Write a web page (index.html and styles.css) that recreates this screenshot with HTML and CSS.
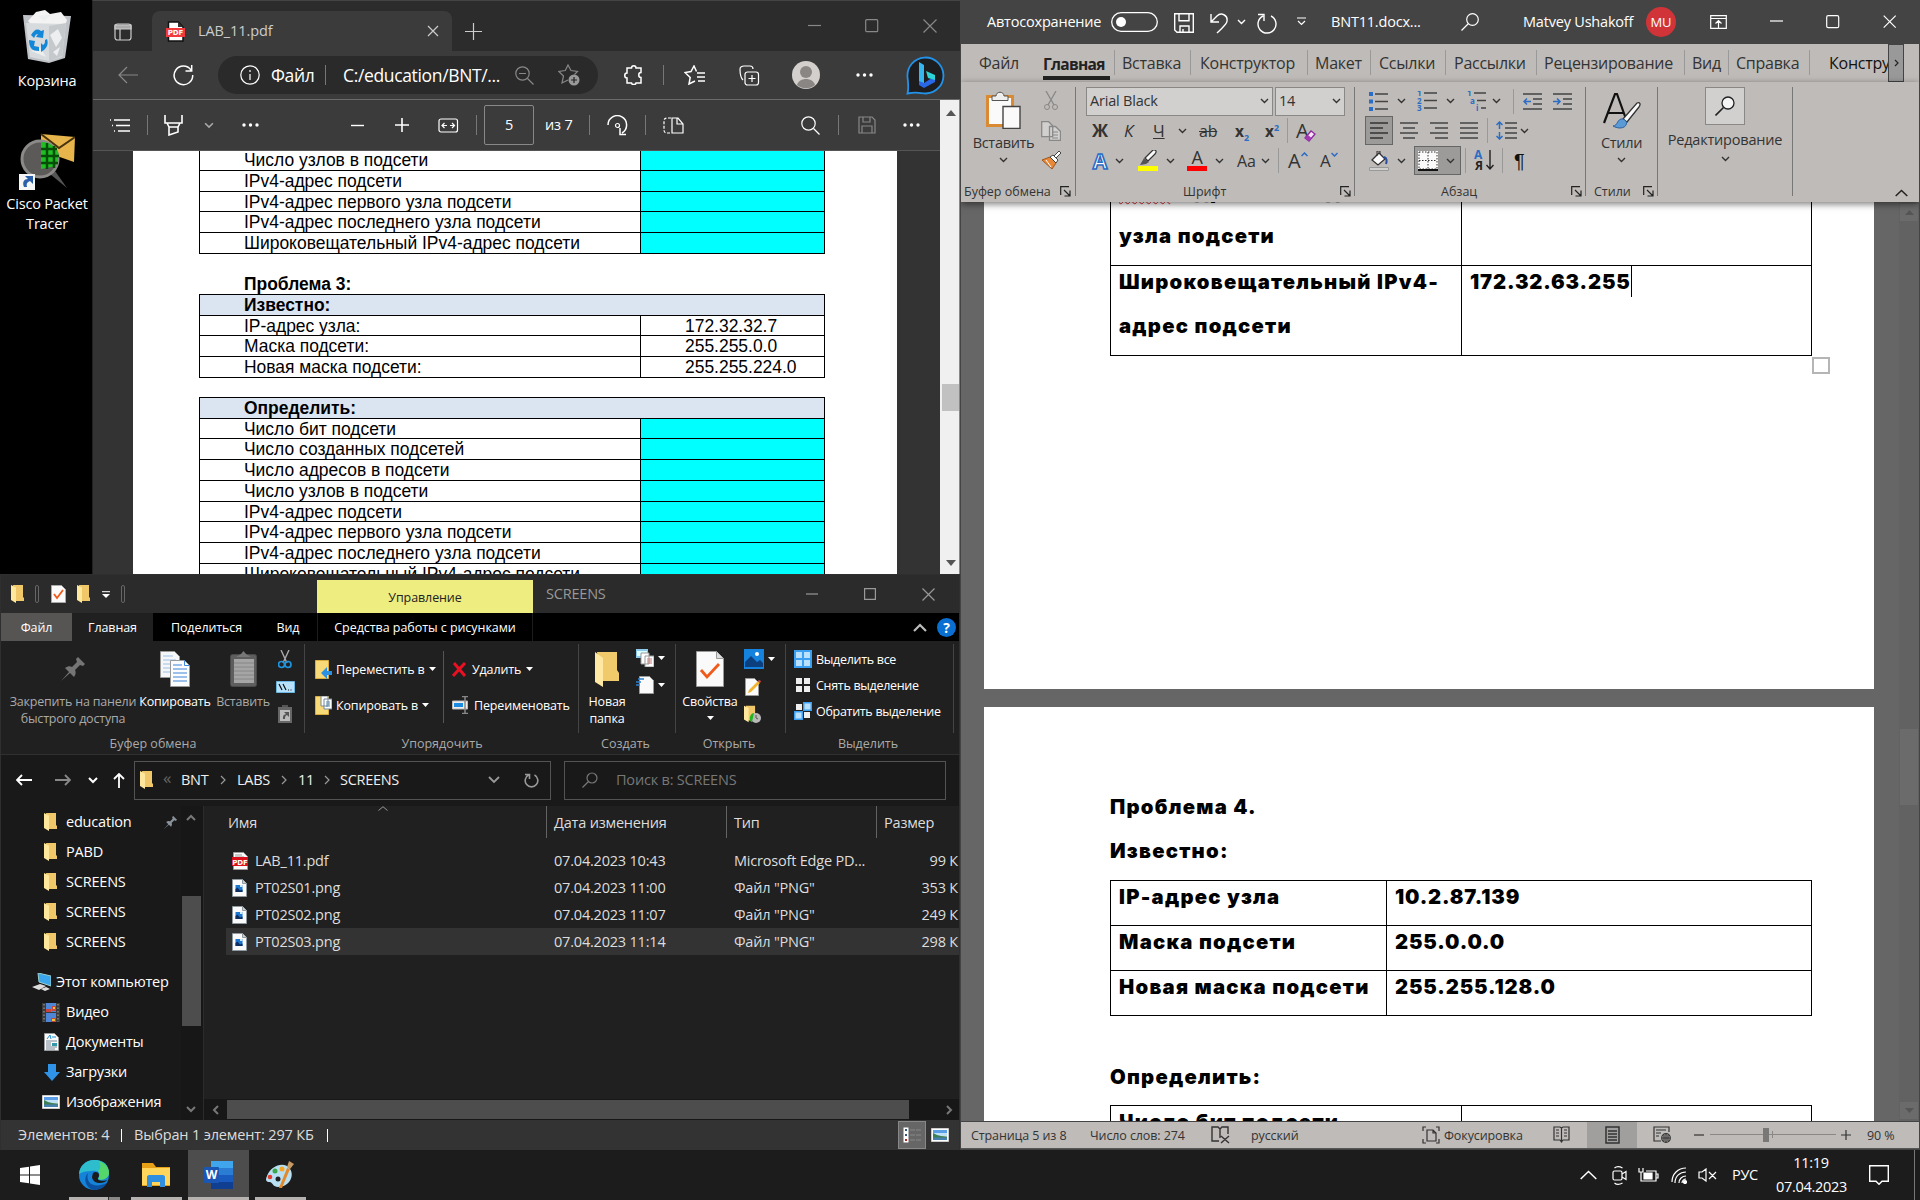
FILE: index.html
```html
<!DOCTYPE html>
<html lang="ru">
<head>
<meta charset="utf-8">
<title>Desktop</title>
<link rel="stylesheet" href="styles.css">
</head>
<body>
<svg class="defs" width="0" height="0">
  <symbol id="folder" viewBox="0 0 13 18"><path d="M2 0h10v12l1 1v3H4z" fill="#f0c869"/><path d="M0 0l5 2.500v15.500L0 15z" fill="#ffe79b"/></symbol>
  <symbol id="chev" viewBox="0 0 9 6"><path d="M1 1l3.500 3.500L8 1" fill="none" stroke="currentColor" stroke-width="1.400"/></symbol>
  <symbol id="tri" viewBox="0 0 7 4"><path d="M0 0h7L3.500 4z" fill="currentColor"/></symbol>
  <symbol id="launch" viewBox="0 0 11 11"><path d="M.7 9V.7H9M4 4l5.500 5.500M10 4.500V10H4.500" fill="none" stroke="#222" stroke-width="1.200"/></symbol>
  <symbol id="png" viewBox="0 0 15 18"><path d="M.5.5h10l4 4v13H.5z" fill="#fafafa" stroke="#8f9aa0"/><path d="M10.500.5v4h4" fill="#ccc" stroke="#8f9aa0"/><path d="M3.500 6h7v7h-7z" fill="#1d77cf"/><path d="M3.500 13v-3l2-1.500 2.500 3 2.500-1v2.500z" fill="#0e2f62"/><path d="M8 6h2.500v2H8z" fill="#cfeaff"/></symbol>
  <symbol id="pic" viewBox="0 0 18 14"><path d="M.5.5h17v13H.5z" fill="#fff" stroke="#ccc"/><path d="M2 2h14v4H2z" fill="#5a9ee8"/><path d="M2 5h14v3H2z" fill="#bfe0f5"/><path d="M2 5l4 2 4 1 6 .5V10H2z" fill="#3f7f56"/><path d="M2 9.500h14V12H2z" fill="#477fae"/></symbol>
  <symbol id="pin" viewBox="0 0 24 24"><path d="M0 24l8-9-4-4c3-2 5-2 7-1l5-5-1-3 2-2 7 7-2 2-3-1-5 5c1 2 1 4-1 7l-4-4z" fill="currentColor"/></symbol>
</svg>
<main class="desktop">
  <aside class="shortcuts">
    <div class="shortcut">
      <svg width="48" height="54" viewBox="0 0 48 54"><path d="M0 5l48 1-6 42-16 5-21-4z" fill="#bfc3c7"/><path d="M5 11l8-9 9-2 5 4 11-2 6 8-3 8-29 1z" fill="#f3f3f3"/><path d="M3 13l40 1-4 33-13 4-19-4z" fill="#d8dbde"/><path d="M26 16l17-3-4 33-13 5z" fill="#c6c9cc"/><path d="M27 25l8-6 4 9-6 9zM30 42l7-5-3 9zM8 41l9-4 6 10zM15 6l6 5 8-7z" fill="#eceeef"/><path d="M8 25c3-5 6-7 10-4l3-1-1 8-7-1 2-3c-3 0-3 3-4 4zM6 30l6 1-1 5 5 1v4c-7 0-10-3-10-11zM18 42v-9l2 2c2-1 2-3 2-5l2-1c2 6-1 9-3 11z" fill="#1488d8"/></svg>
      <span>Корзина</span>
    </div>
    <div class="shortcut cisco">
      <svg width="56" height="58" viewBox="0 0 56 58"><path d="M22 2l34 3-1 25-20-7-13 2z" fill="#e8b44c"/><path d="M22 2l18 14L56 5" fill="none" stroke="#46330f" stroke-width="2"/><path d="M31 42l5-3 12 17z" fill="#555"/><circle cx="21" cy="27" r="18" fill="#5c5a58" stroke="#8c8a88" stroke-width="3"/><path d="M22 10a18 18 0 0 1 18 13L37 34l-15 3z" fill="#20bd25"/><path d="M28 11v26M35 14v22M22 17h16M22 24h18M22 31h17" stroke="#064d08" stroke-width="2.500"/><path d="M0 42h16v16H0z" fill="#f5f5f5"/><path d="M5 55c-2-5 0-8 4-8l-3-3h8v8l-3-3c-3 1-4 3-3 6z" fill="#2a5ea8"/></svg>
      <span>Cisco Packet<br>Tracer</span>
    </div>
  </aside>

  <section class="win edge">
    <header class="edge-title">
      <svg class="i low" width="18" height="18"><rect x="1" y="1" width="16" height="16" rx="2.500"/><path d="M1 2h16v4H1z" fill="#aaa"/><path d="M6 6v11"/></svg>
      <div class="edge-tab">
        <svg width="20" height="21" viewBox="0 0 20 21"><path d="M2.500 1h10L17 6v14H2.500z" fill="#fff" stroke="#111" stroke-width="1.500"/><path d="M12 1v5h5z" fill="#333"/><path d="M0 7h19v9H0z" fill="#f2393d"/><text x="9.500" y="14.300" class="pdf-mark">PDF</text></svg>
        <span>LAB_11.pdf</span>
        <svg class="i" width="12" height="12"><path d="M1 1l10 10M11 1L1 11"/></svg>
      </div>
      <svg class="i low" width="17" height="17"><path d="M0 8.500h17M8.500 0v17"/></svg>
      <svg class="i dim" width="13" height="13"><path d="M0 6.500h13"/></svg>
      <svg class="i dim" width="14" height="14"><rect x=".7" y=".7" width="12" height="12" rx="1"/></svg>
      <svg class="i dim" width="14" height="14"><path d="M.5.5l13 13M13.500.5l-13 13"/></svg>
    </header>
    <div class="edge-address">
      <svg class="i dim" width="20" height="18"><path d="M9 1L1 9l8 8M1 9h19"/></svg>
      <svg class="i" width="21" height="21"><path d="M18 5A9.300 9.300 0 1 0 19.700 10M12.500 6h6.200V0" stroke-width="1.500"/></svg>
      <div class="pill">
        <svg class="i" width="20" height="20"><circle cx="10" cy="10" r="9.200"/><path d="M10 9v6M10 5v2"/></svg>
        <span>Файл</span><i class="bar"></i><span>C:/education/BNT/...</span>
        <svg class="i dim" width="19" height="19"><circle cx="7.500" cy="7.500" r="6.700"/><path d="M12.500 12.500l6 6M4 7.500h7"/></svg>
        <svg class="i dim" width="22" height="22"><path d="M10 16l-6 3 1.500-7L.8 7.500l6.500-1L10 1l3 5.500 6.500 1-3 3"/><circle cx="16" cy="16" r="5.500" fill="#999" stroke="none"/><path d="M16 13v6M13 16h6" stroke="#222"/></svg>
      </div>
      <svg class="i" width="20" height="20"><path d="M3 3h4.500c0-3 4.500-3 4.500 0h5v4.500c-3 0-3 5 0 5V18h-5c0 2-4.500 2-4.500 0H3v-5c-3 0-3-5 0-5z" stroke-width="1.500"/></svg>
      <i class="bar"></i>
      <svg class="i" width="21" height="20"><path d="M13 8h8M13 12h8M14 16h7M11 16l-6 3 1.200-6.500L1 7.500l6-1L10 1l2.500 5.500" stroke-width="1.500"/></svg>
      <svg class="i" width="21" height="21"><rect x="6" y="7" width="13.500" height="13" rx="2.500"/><path d="M13 10v7M9.500 13.500h7M4 15C1 12 1 8 1 4c0-2 2-3 4-3h6c2 0 3 1 3 3"/></svg>
      <svg width="28" height="28"><circle cx="14" cy="14" r="14" fill="#d2cfcc"/><circle cx="14" cy="11" r="6" fill="#8a8683"/><path d="M5 24c2-8 16-8 18 0a14 14 0 0 1-18 0z" fill="#8a8683"/></svg>
      <svg width="17" height="4"><g fill="#fff"><circle cx="2" cy="2" r="1.700"/><circle cx="8.500" cy="2" r="1.700"/><circle cx="15" cy="2" r="1.700"/></g></svg>
      <svg width="39" height="39" viewBox="0 0 39 39"><path d="M1.500 37.500C3 32 2 26 1.500 21A18 18 0 1 1 20 37.500c-6 0-8-2-18.500 0z" fill="#1d1d1f" stroke="#2392e8" stroke-width="1.800"/><path d="M13 6l5 3v20l-5-3z" fill="#36b5ee"/><path d="M13 25l5 2 11-7v6l-11 6-5-3z" fill="#2867e5"/><path d="M20 15l9 4v5l-7-2z" fill="#2cd3d7"/></svg>
    </div>
    <div class="edge-main">
      <div class="pdf">
        <div class="pdf-tools">
          <svg class="i" width="22" height="15"><path d="M5 2h16M7 7.500h14M9 13h12M1 2h1M3 7.500h1M5 13h1" stroke-width="1.700"/></svg>
          <i class="bar"></i>
          <svg class="i" width="19" height="21"><path d="M1 0v8h17V0M3 8l2 4h9l2-4M5 12v8l9-3v-5" stroke-width="1.600"/></svg>
          <svg class="soft" width="10" height="7"><use href="#chev"/></svg>
          <svg width="17" height="4"><g fill="#fff"><circle cx="2" cy="2" r="1.700"/><circle cx="8.500" cy="2" r="1.700"/><circle cx="15" cy="2" r="1.700"/></g></svg>
          <svg class="i" width="13" height="13"><path d="M0 6.500h13" stroke-width="1.400"/></svg>
          <svg class="i" width="14" height="14"><path d="M0 7h14M7 0v14" stroke-width="1.600"/></svg>
          <svg class="i" width="21" height="15"><rect x="1" y="1" width="18.500" height="13" rx="2"/><path d="M6.500 5L4 7.500 6.500 10M4.500 7.500H9M14 5l2.500 2.500L14 10M12 7.500h4"/></svg>
          <i class="bar"></i>
          <span class="page-input">5</span>
          <span>из 7</span>
          <i class="bar"></i>
          <svg class="i" width="21" height="21"><path d="M1 10a9.300 9.300 0 1 1 14 8M13 13v6.500h6" stroke-width="1.500"/><circle cx="10.500" cy="10.500" r="2"/></svg>
          <i class="bar"></i>
          <svg class="i" width="21" height="17"><path d="M8 1H4C2 1 1 2 1 4v9c0 2 1 3 3 3h4" stroke-dasharray="3 1.500"/><path d="M9 1h6l5 6v9H9zM14 1v6h6"/></svg>
          <svg class="i" width="19" height="19"><circle cx="7.500" cy="7.500" r="6.700"/><path d="M12.500 12.500l6 6"/></svg>
          <i class="bar"></i>
          <svg class="i dim" width="18" height="18"><path d="M1 1h13l3 3v13H1zM4 17v-7h10v7M5 1v5h7V1"/></svg>
          <svg width="17" height="4"><g fill="#fff"><circle cx="2" cy="2" r="1.700"/><circle cx="8.500" cy="2" r="1.700"/><circle cx="15" cy="2" r="1.700"/></g></svg>
        </div>
        <div class="pdf-view">
          <div class="sheet">
            <div class="ptable">
              <div class="prow"><span>Число узлов в подсети</span><span class="ans"></span></div>
              <div class="prow"><span>IPv4-адрес подсети</span><span class="ans"></span></div>
              <div class="prow"><span>IPv4-адрес первого узла подсети</span><span class="ans"></span></div>
              <div class="prow"><span>IPv4-адрес последнего узла подсети</span><span class="ans"></span></div>
              <div class="prow"><span>Широковещательный IPv4-адрес подсети</span><span class="ans"></span></div>
            </div>
            <h2>Проблема 3:</h2>
            <div class="ptable top">
              <div class="prow head"><b>Известно:</b></div>
              <div class="prow"><span>IP-адрес узла:</span><span class="val">172.32.32.7</span></div>
              <div class="prow"><span>Маска подсети:</span><span class="val">255.255.0.0</span></div>
              <div class="prow"><span>Новая маска подсети:</span><span class="val">255.255.224.0</span></div>
            </div>
            <div class="ptable top second">
              <div class="prow head"><b>Определить:</b></div>
              <div class="prow"><span>Число бит подсети</span><span class="ans"></span></div>
              <div class="prow"><span>Число созданных подсетей</span><span class="ans"></span></div>
              <div class="prow"><span>Число адресов в подсети</span><span class="ans"></span></div>
              <div class="prow"><span>Число узлов в подсети</span><span class="ans"></span></div>
              <div class="prow"><span>IPv4-адрес подсети</span><span class="ans"></span></div>
              <div class="prow"><span>IPv4-адрес первого узла подсети</span><span class="ans"></span></div>
              <div class="prow"><span>IPv4-адрес последнего узла подсети</span><span class="ans"></span></div>
              <div class="prow"><span>Широковещательный IPv4-адрес подсети</span><span class="ans"></span></div>
            </div>
          </div>
        </div>
      </div>
      <div class="light-scroll">
        <svg width="10" height="6"><path d="M0 6l5-6 5 6z" fill="#555"/></svg>
        <i></i>
        <svg width="10" height="6"><path d="M0 0h10L5 6z" fill="#555"/></svg>
      </div>
    </div>
  </section>

  <section class="win explorer">
    <header class="ex-title">
      <svg width="13" height="18"><use href="#folder"/></svg>
      <i class="slot"></i>
      <svg width="15" height="18"><path d="M.5.5h10l4 4v13H.5z" fill="#fafafa" stroke="#aaa"/><path d="M3 9l3 4 6-8" fill="none" stroke="#f05a1a" stroke-width="1.800"/></svg>
      <svg width="13" height="18"><use href="#folder"/></svg>
      <svg width="8" height="7"><path d="M0 .7h8" stroke="#fff"/><path d="M0 3h8L4 7z" fill="#fff"/></svg>
      <i class="slot"></i>
      <div class="manage">Управление</div>
      <span>SCREENS</span>
      <svg class="i" width="12" height="12"><path d="M0 6h12"/></svg>
      <svg class="i" width="12" height="12"><path d="M.6.6h10.800v10.800H.6z"/></svg>
      <svg class="i" width="13" height="13"><path d="M.5.5l12 12M12.500.5l-12 12"/></svg>
    </header>
    <nav class="ex-tabs">
      <span class="file">Файл</span><span class="on">Главная</span><span>Поделиться</span><span>Вид</span><span class="ctx">Средства работы с рисунками</span>
      <svg class="i" width="14" height="9"><path d="M1 8l6-6 6 6" stroke-width="2.200"/></svg>
      <b class="help">?</b>
    </nav>
    <div class="ex-ribbon">
      <div class="grp g1">
        <div class="grp-body">
          <div class="big off pinb"><svg width="24" height="24"><use href="#pin"/></svg><span>Закрепить на панели<br>быстрого доступа</span></div>
          <div class="big"><svg width="30" height="36" viewBox="0 0 30 36"><path d="M.5.5h14l5 5v21H.5z" fill="#f4f6f8" stroke="#999"/><path d="M3 5h10M3 9h13M3 13h13M3 17h13M3 21h13" stroke="#9cc0e8"/><path d="M10.500 9.500h14l5 5v21h-19z" fill="#fbfcfd" stroke="#999"/><path d="M24.500 9.500v5h5M13 14h9M13 18h14M13 22h14M13 26h14M13 30h14" fill="none" stroke="#3c85d8"/></svg><span>Копировать</span></div>
          <div class="big off"><svg width="27" height="36" viewBox="0 0 27 36"><rect x=".5" y="3.500" width="26" height="32" rx="2" fill="#5e5e5e" stroke="#494949"/><path d="M4 8h20v24H4z" fill="#a5a5a5"/><path d="M4 12h20M4 16h20M4 20h20M4 24h20M4 28h20" stroke="#868686"/><path d="M6 6l5-3 2.500-3L16 3l5 3z" fill="#777"/></svg><span>Вставить</span></div>
          <div class="minis">
            <svg width="14" height="19" viewBox="0 0 14 19"><path d="M3 0l6 13M11 0L5 13" stroke="#aaa" stroke-width="1.400"/><circle cx="3.500" cy="14.500" r="3" fill="none" stroke="#1e93e0" stroke-width="1.700"/><circle cx="10" cy="14.500" r="3" fill="none" stroke="#1e93e0" stroke-width="1.700"/></svg>
            <svg width="19" height="12"><path d="M.5.5h18v11H.5z" fill="#b8e2fb" stroke="#6bb5e3"/><path d="M3 3l3 6M7 3l3 6M12 9h1M14.500 9h1" stroke="#111" stroke-width="1.200"/></svg>
            <svg width="14" height="18"><path d="M0 2h14v16H0z" fill="#666"/><path d="M2 5h10v11H2z" fill="#bbb"/><path d="M4 2h6V0H4zM5 14c0-3 0-4 3-5L6 7h5v5l-2-2c-2 1-2 2-2 4z" fill="#555"/></svg>
          </div>
        </div>
        <footer>Буфер обмена</footer>
      </div>
      <div class="grp g2">
        <div class="grp-body two">
          <div><svg width="17" height="19"><path d="M.5.5h13v18H.5z" fill="#f8d978" stroke="#d8ad3d"/><path d="M17 11h-5V7l-6 6 6 6v-4h5z" fill="#2b8fe2"/></svg><span>Переместить в</span><svg width="7" height="4"><use href="#tri"/></svg></div>
          <div class="sep"><svg width="15" height="15"><path d="M2 1l11 13M13 1L1 14" stroke="#e81123" stroke-width="3"/></svg><span>Удалить</span><svg width="7" height="4"><use href="#tri"/></svg></div>
          <div><svg width="17" height="19"><path d="M.5.5h13v18H.5z" fill="#f8d978" stroke="#d8ad3d"/><path d="M6 0h7v10H6zM9 3h8v10H9z" fill="#fff" stroke="#789"/><path d="M11 6h4M11 8h4M11 10h4" stroke="#58a"/></svg><span>Копировать в</span><svg width="7" height="4"><use href="#tri"/></svg></div>
          <div class="sep"><svg width="17" height="18"><path d="M.5 5h15v8H.5z" fill="#eee" stroke="#bbb"/><path d="M2 7h9v4H2z" fill="#1c8be0"/><path d="M10 .5h6M10 17.500h6M13 0v18" stroke="#888" stroke-width="1.500"/></svg><span>Переименовать</span></div>
        </div>
        <footer>Упорядочить</footer>
      </div>
      <div class="grp g3">
        <div class="grp-body">
          <div class="big"><svg width="24" height="36" viewBox="0 0 24 36"><path d="M2 1h20v18l2 3v8H6z" fill="#f1ca6c"/><path d="M0 1l8 6v29L0 31z" fill="#ffe8a3"/></svg><span>Новая<br>папка</span></div>
          <div class="minis">
            <div><svg width="18" height="18"><path d="M0 0h12v9H0z" fill="#8dc9e8"/><path d="M1 2h10v5H1z" fill="#dff"/><path d="M5 4h8v11H5zM9 7h9v11H9z" fill="#fff" stroke="#999"/><path d="M11 10h5M11 12h5M11 14h5" stroke="#c77"/></svg><svg width="7" height="4"><use href="#tri"/></svg></div>
            <div><svg width="18" height="18"><path d="M3.500.5h10l4 4v13h-14z" fill="#fafafa" stroke="#999"/><path d="M2 3h6M0 6h5M-1 9h5" stroke="#2a80d0" stroke-width="1.400"/></svg><svg width="7" height="4"><use href="#tri"/></svg></div>
          </div>
        </div>
        <footer>Создать</footer>
      </div>
      <div class="grp g4">
        <div class="grp-body">
          <div class="big"><svg width="28" height="36" viewBox="0 0 28 36"><path d="M.5.5h20l7 7v28H.5z" fill="#fafafa" stroke="#999"/><path d="M20.500.5v7h7" fill="#ddd" stroke="#999"/><path d="M5 19l6 7 12-13" fill="none" stroke="#f05a1a" stroke-width="2.800"/></svg><span>Свойства</span><svg width="7" height="4"><use href="#tri"/></svg></div>
          <div class="minis">
            <div><svg width="20" height="20"><path d="M0 0h20v20H0z" fill="#1583de"/><path d="M1 18V13l6-6 6 6 3-2 3 3v4z" fill="#0c3f7e"/><circle cx="13" cy="5" r="2" fill="#fff"/></svg><svg width="7" height="4"><use href="#tri"/></svg></div>
            <svg width="17" height="18"><path d="M1.500.5h9l4 4v13h-13z" fill="#fafafa" stroke="#999"/><path d="M4 15l1-3 9-9 2 2-9 9z" fill="#f0b42f"/><path d="M14 3l2 2 1-2-2-1z" fill="#d44"/></svg>
            <svg width="17" height="19" viewBox="0 0 17 19"><use href="#folder" width="12" height="18"/><circle cx="12" cy="13" r="5" fill="#b9b9b9"/><path d="M7 17c-3-4 0-9 3-9l-2 9z" fill="#22b422"/><path d="M12 10v3l2 1" stroke="#555" fill="none"/></svg>
          </div>
        </div>
        <footer>Открыть</footer>
      </div>
      <div class="grp g5">
        <div class="grp-body col">
          <div><svg width="18" height="18"><path d="M0 0h18v18H0z" fill="#3a9ff0"/><path d="M2 2h6v6H2zM10 2h6v6h-6zM2 10h6v6H2zM10 10h6v6h-6z" fill="#b9e0ff"/></svg><span>Выделить все</span></div>
          <div><svg width="18" height="18"><path d="M2 2h6v6H2zM10 2h6v6h-6zM2 10h6v6H2zM10 10h6v6h-6z" fill="#eee"/></svg><span>Снять выделение</span></div>
          <div><svg width="18" height="18"><path d="M9 0h9v9H9zM0 9h9v9H0z" fill="#3a9ff0"/><path d="M2 2h6v6H2zM10 10h6v6h-6z" fill="#eee"/><path d="M10.500 1.500h6v6h-6zM1.500 10.500h6v6h-6z" fill="#b9e0ff"/></svg><span>Обратить выделение</span></div>
        </div>
        <footer>Выделить</footer>
      </div>
    </div>
    <div class="ex-address">
      <svg class="i" width="16" height="12"><path d="M6 1L1 6l5 5M1 6h15" stroke-width="1.800"/></svg>
      <svg class="i dim" width="16" height="12"><path d="M10 1l5 5-5 5M15 6H0" stroke-width="1.800"/></svg>
      <svg class="i" width="10" height="7"><path d="M1 1l4 4 4-4" stroke-width="2"/></svg>
      <svg class="i" width="12" height="15"><path d="M1 6l5-5 5 5M6 1v14" stroke-width="1.800"/></svg>
      <div class="path">
        <svg width="13" height="18"><use href="#folder"/></svg><em class="up">«</em><span>BNT</span><svg class="i" width="6" height="10"><path d="M1 1l4 4-4 4"/></svg><span>LABS</span><svg class="i" width="6" height="10"><path d="M1 1l4 4-4 4"/></svg><span>11</span><svg class="i" width="6" height="10"><path d="M1 1l4 4-4 4"/></svg><span>SCREENS</span>
        <svg class="i" width="12" height="8"><path d="M1 1l5 5 5-5" stroke-width="1.800"/></svg>
        <svg class="i" width="15" height="15"><path d="M10.500 2a6.300 6.300 0 1 1-6 0M1 1.500h4.500V6" stroke-width="1.600"/></svg>
      </div>
      <div class="search">
        <svg class="i" width="16" height="16"><circle cx="10" cy="6" r="5"/><path d="M6.500 9.500L.5 15.500"/></svg><span>Поиск в: SCREENS</span>
      </div>
    </div>
    <div class="ex-body">
      <div class="tree">
        <div class="node"><svg width="13" height="18"><use href="#folder"/></svg><span>education</span><svg class="pinned" width="13" height="13"><use href="#pin"/></svg></div>
        <div class="node"><svg width="13" height="18"><use href="#folder"/></svg><span>PABD</span></div>
        <div class="node"><svg width="13" height="18"><use href="#folder"/></svg><span>SCREENS</span></div>
        <div class="node"><svg width="13" height="18"><use href="#folder"/></svg><span>SCREENS</span></div>
        <div class="node"><svg width="13" height="18"><use href="#folder"/></svg><span>SCREENS</span></div>
        <div class="node root"><svg width="19" height="18"><path d="M6 0l13 3v10L7 9z" fill="#3ba7ea" stroke="#9cc"/><path d="M0 14l8-3 6 2-7 4zM9 16l5-2 4 2-5 2z" fill="#ddd"/></svg><span>Этот компьютер</span></div>
        <div class="node wide"><svg width="18" height="19"><path d="M0 0h18v19H0z" fill="#3b3b3b"/><path d="M4 0h10v9H4zM4 10h10v9H4z" fill="#4f86d8"/><path d="M4 6h5v3H4zM10 3h4v5h-4zM9 15h5v4H9z" fill="#c8443c"/><path d="M11 4h2v2h-2zM10 16h3v2h-3z" fill="#f0c23a"/><path d="M2 1v18M16 1v18" stroke="#aaa" stroke-dasharray="1.500 2"/></svg><span>Видео</span></div>
        <div class="node"><svg width="15" height="18"><path d="M.5.5h10l4 4v13H.5z" fill="#fafafa" stroke="#999"/><path d="M2 8h11M2 10h5M2 12h5M2 14h11M2 16h9" stroke="#789"/><path d="M3 6l3-4 1 4M8 4h4" stroke="#2191d0" fill="none"/><path d="M8 10h5v3H8z" fill="#39a"/></svg><span>Документы</span></div>
        <div class="node"><svg width="16" height="17"><path d="M4 0h8v8h4l-8 9-8-9h4z" fill="#2f93e8"/></svg><span>Загрузки</span></div>
        <div class="node wide"><svg width="18" height="14"><use href="#pic"/></svg><span>Изображения</span></div>
      </div>
      <div class="dark-scroll v"><svg width="10" height="7"><path d="M1 6l4-4 4 4" fill="none" stroke="#777" stroke-width="2"/></svg><i></i><svg width="10" height="7"><path d="M1 1l4 4 4-4" fill="none" stroke="#777" stroke-width="2"/></svg></div>
      <div class="files">
        <div class="frow cols"><span></span><span>Имя<svg class="sort" width="10" height="5"><path d="M.5 4.500L5 .7l4.500 3.800" fill="none" stroke="#999"/></svg></span><span>Дата изменения</span><span>Тип</span><span>Размер</span></div>
        <div class="frow"><svg width="16" height="18"><path d="M1.500.5h10l4 4v13h-14z" fill="#fafafa" stroke="#999"/><path d="M3 3h7M3 5h9" stroke="#999"/><path d="M0 5h16v9H0z" fill="#d9101c"/><text x="8" y="12.500" class="pdf-mark">PDF</text></svg><span>LAB_11.pdf</span><span>07.04.2023 10:43</span><span>Microsoft Edge PD...</span><span>99 К</span></div>
        <div class="frow"><svg width="15" height="18"><use href="#png"/></svg><span>PT02S01.png</span><span>07.04.2023 11:00</span><span>Файл "PNG"</span><span>353 К</span></div>
        <div class="frow"><svg width="15" height="18"><use href="#png"/></svg><span>PT02S02.png</span><span>07.04.2023 11:07</span><span>Файл "PNG"</span><span>249 К</span></div>
        <div class="frow sel"><svg width="15" height="18"><use href="#png"/></svg><span>PT02S03.png</span><span>07.04.2023 11:14</span><span>Файл "PNG"</span><span>298 К</span></div>
        <div class="dark-scroll h"><svg width="7" height="10"><path d="M6 1L2 5l4 4" fill="none" stroke="#777" stroke-width="2"/></svg><i></i><svg width="7" height="10"><path d="M1 1l4 4-4 4" fill="none" stroke="#777" stroke-width="2"/></svg></div>
      </div>
    </div>
    <footer class="ex-status">
      <span>Элементов: 4</span><i></i><span>Выбран 1 элемент: 297 КБ</span><i></i>
      <b class="view-on"><svg width="18" height="16"><path d="M.5.5h5v15h-5z" fill="#fff"/><path d="M2 2h2v2H2zM2 7h2v2H2z" fill="#357"/><path d="M2 12h2v2H2z" fill="#b22"/><path d="M7 3h5M13 3h5M7 8h5M13 8h5M7 13h5M13 13h5" stroke="#888"/></svg></b>
      <svg width="18" height="14"><use href="#pic"/></svg>
    </footer>
  </section>

  <section class="win word">
    <header class="wd-title">
      <span>Автосохранение</span>
      <svg width="47" height="20"><rect x=".7" y=".7" width="45.600" height="18.600" rx="9.300" fill="none" stroke="#fff" stroke-width="1.300"/><circle cx="10" cy="10" r="5" fill="#fff"/></svg>
      <svg class="i down" width="20" height="20"><path d="M.7.7h18.600v18.600H3L.7 17zM5 .7v7h10v-7M6 19v-6h9v6M9 16v3" stroke-width="1.400"/></svg>
      <svg class="i down" width="19" height="21"><path d="M1 1v8h8M1 9l6-6c4-4 11-1 10 5 0 3-2 4-10 12" stroke-width="1.400"/></svg>
      <svg width="9" height="6"><use href="#chev"/></svg>
      <svg class="i down" width="20" height="21"><path d="M14 3a9 9 0 1 1-8 0M1 1.500h6V8" stroke-width="1.400"/></svg>
      <svg class="i" width="9" height="9"><path d="M0 1h9M1 4l3.500 3.500L8 4"/></svg>
      <span>BNT11.docx...</span>
      <svg class="i" width="18" height="18"><circle cx="11.500" cy="6.500" r="5.800"/><path d="M7.500 10.500L.5 17.500"/></svg>
      <span>Matvey Ushakoff</span>
      <b class="mu">MU</b>
      <svg class="i" width="17" height="14"><path d="M.7.7h15.600v12.600H.7zM.7 3.500h15.600M8.500 13V6M5.500 8.500l3-3 3 3"/></svg>
      <svg class="i" width="13" height="13"><path d="M0 6h13"/></svg>
      <svg class="i" width="14" height="14"><rect x=".7" y=".7" width="12" height="12" rx="1.500"/></svg>
      <svg class="i" width="14" height="14"><path d="M.7.7l12 12M12.700.7l-12 12"/></svg>
    </header>
    <nav class="wd-tabs"><span>Файл</span><span class="on">Главная</span><i></i><span>Вставка</span><i></i><span>Конструктор</span><i></i><span>Макет</span><i></i><span>Ссылки</span><i></i><span>Рассылки</span><i></i><span>Рецензирование</span><i></i><span>Вид</span><i></i><span>Справка</span><i></i><span class="cut">Конструктор</span><b class="more"><svg class="i" width="5" height="8"><path d="M1 1l3 3-3 3"/></svg></b></nav>
    <div class="wd-ribbon">
      <div class="wg w1">
        <div class="w1-body">
          <div class="wbig"><svg width="35" height="38" viewBox="0 0 35 38"><path d="M1.500 5.500h25v29h-25z" fill="#fafafa" stroke="#d98a33" stroke-width="3"/><path d="M6 9.500V5h4c0-5 8-5 8 0h4v4.500z" fill="#eee" stroke="#555"/><path d="M17 15.500h17v22H17z" fill="#fafafa" stroke="#444" stroke-width="1.400"/></svg><span>Вставить</span><svg width="9" height="6"><use href="#chev"/></svg></div>
          <div class="w1-minis">
            <svg width="14" height="20"><path d="M2 0l8 14M12 0L4 14" stroke="#888" stroke-width="1.300"/><circle cx="3" cy="16" r="2.500" fill="none" stroke="#888"/><circle cx="11" cy="16" r="2.500" fill="none" stroke="#888"/></svg>
            <svg width="20" height="20"><path d="M.7.7h7l4 4v11h-11zM8.500 5.500h6l5 5v9h-11z" fill="#d2d0ce" stroke="#888" stroke-width="1.300"/><path d="M11 11h6M11 14h6M11 17h6" stroke="#888"/></svg>
            <svg width="20" height="19"><path d="M1 9l8-3 6 6-4 6z" fill="#e8893a" stroke="#a5561b"/><path d="M9 6l3-2 5 5-2 3z" fill="#fff" stroke="#444"/><path d="M13 5l5-5 2 2-5 5z" fill="#fff" stroke="#444"/><path d="M5 9l5 7" stroke="#fff"/></svg>
          </div>
        </div>
        <footer><span>Буфер обмена</span><svg width="11" height="11"><use href="#launch"/></svg></footer>
      </div>
      <div class="wg w2">
        <div class="combos"><div class="combo"><span>Arial Black</span><svg width="9" height="6"><use href="#chev"/></svg></div><div class="combo"><span>14</span><svg width="9" height="6"><use href="#chev"/></svg></div></div>
        <div class="w2-a"><b>Ж</b><em>К</em><u>Ч</u><svg width="9" height="6"><use href="#chev"/></svg><s>ab</s><span class="xb">x<sub>2</sub></span><span class="xb">x<sup>2</sup></span><i></i><span class="era">A<svg width="12" height="12"><path d="M1 8l6-7 4 3-6 7z" fill="#f6e6f8" stroke="#8d2aa0" stroke-width="1.300"/><path d="M1 8l3-3 3.500 3L5 11z" fill="#a33bb5"/></svg></span></div>
        <div class="w2-b"><svg width="20" height="20"><text x="10" y="18" class="fx">A</text></svg><svg width="9" height="6"><use href="#chev"/></svg><svg width="20" height="21"><path d="M0 16h20v5H0z" fill="#ff0"/><path d="M7 8l8-8c3-1 4 2 2 4l-7 7z" fill="#fafafa" stroke="#333" stroke-width="1.200"/><path d="M6 8l5 4-3 2-6 1z" fill="#555"/></svg><svg width="9" height="6"><use href="#chev"/></svg><span class="fa">A</span><svg width="9" height="6"><use href="#chev"/></svg><span class="aa">Aa</span><svg width="9" height="6"><use href="#chev"/></svg><i></i><span class="gr">A<svg width="7" height="5"><path d="M.5 4L3.500 1l3 3" fill="none" stroke="#2b6cc4" stroke-width="1.500"/></svg></span><span class="gr s">A<svg width="7" height="5"><path d="M.5 1L3.500 4l3-3" fill="none" stroke="#2b6cc4" stroke-width="1.500"/></svg></span></div>
        <footer><span>Шрифт</span><svg width="11" height="11"><use href="#launch"/></svg></footer>
      </div>
      <div class="wg w3">
        <div class="w3-a"><svg width="19" height="19"><path d="M0 0h4v4H0zM0 7.500h4v4H0zM0 15h4v4H0z" fill="#2b6cc4"/><path d="M6 2h13M6 9.500h13M6 17h13" stroke="#444" stroke-width="1.500"/></svg><svg width="9" height="6"><use href="#chev"/></svg><svg width="20" height="20"><path d="M7 2h13M7 9.500h13M7 17h13" stroke="#444" stroke-width="1.500"/><g class="num"><text x="0" y="5">1</text><text x="0" y="12.500">2</text><text x="0" y="20">3</text></g></svg><svg width="9" height="6"><use href="#chev"/></svg><svg width="20" height="20"><path d="M7 2h12M10 9.500h9M14 17h5" stroke="#444" stroke-width="1.500"/><g class="num"><text x="0" y="5">1</text><text x="3" y="12.500">a</text><text x="9" y="20">i</text></g></svg><svg width="9" height="6"><use href="#chev"/></svg><i></i><svg width="19" height="17"><path d="M0 1h19M10 6h9M10 11h9M0 16h19" stroke="#444" stroke-width="1.500"/><path d="M8 8.500H1M4 5.500l-3 3 3 3" fill="none" stroke="#2b6cc4" stroke-width="1.500"/></svg><svg width="19" height="17"><path d="M0 1h19M10 6h9M10 11h9M0 16h19" stroke="#444" stroke-width="1.500"/><path d="M0 8.500h7M4 5.500l3 3-3 3" fill="none" stroke="#2b6cc4" stroke-width="1.500"/></svg></div>
        <div class="w3-b"><b class="box"><svg width="19" height="17"><path d="M0 1h18M0 6h13M0 11h18M0 16h13" stroke="#333" stroke-width="1.500"/></svg></b><svg width="19" height="17"><path d="M0 1h18M3 6h12M0 11h18M3 16h12" stroke="#444" stroke-width="1.500"/></svg><svg width="19" height="17"><path d="M0 1h18M5 6h13M0 11h18M5 16h13" stroke="#444" stroke-width="1.500"/></svg><svg width="19" height="17"><path d="M0 1h18M0 6h18M0 11h18M0 16h18" stroke="#444" stroke-width="1.500"/></svg><i></i><svg width="21" height="19"><path d="M9 2h12M9 7h12M9 12h12M9 17h12" stroke="#444" stroke-width="1.500"/><path d="M3.500 8V1M.5 4l3-3 3 3M3.500 11v7M.5 15l3 3 3-3" fill="none" stroke="#2b6cc4" stroke-width="1.500"/></svg><svg width="9" height="6"><use href="#chev"/></svg></div>
        <div class="w3-c"><svg width="20" height="20"><path d="M.5 16.500h19v3H.5z" fill="#d2d0ce" stroke="#999"/><path d="M3 9l7-7 6 6-7 6z" fill="#fafafa" stroke="#333" stroke-width="1.300"/><path d="M15 6c3 1 3 4 2 7" fill="none" stroke="#2b4fa0" stroke-width="2"/><path d="M8 5V0h3v3" fill="none" stroke="#333"/></svg><svg width="9" height="6"><use href="#chev"/></svg><b class="box wide"><svg width="20" height="20"><path d="M0 0h20v19H0z" fill="#fafafa"/><path d="M1 1h18v17H1zM10 1v17M1 9.500h18" fill="none" stroke="#333" stroke-dasharray="1.500 1.500"/><path d="M0 19h20" stroke="#111" stroke-width="2"/></svg><svg width="9" height="6"><use href="#chev"/></svg></b><i></i><svg width="20" height="21"><g class="num az"><text x="0" y="9">А</text><text x="1" y="20" class="dk">Я</text></g><path d="M16 0v18M12.500 15l3.500 4 3.500-4" fill="none" stroke="#222" stroke-width="1.400"/></svg><i></i><span class="pil">¶</span></div>
        <footer><span>Абзац</span><svg width="11" height="11"><use href="#launch"/></svg></footer>
      </div>
      <div class="wg w4">
        <div class="wbig"><svg width="38" height="38" viewBox="0 0 38 38"><path d="M1 32L12 3h2l9 25M5 22h16" fill="none" stroke="#111" stroke-width="2.200"/><path d="M20 28L34 12c3-1 4 1 2 4L24 31z" fill="#fafafa" stroke="#333" stroke-width="1.300"/><path d="M10 35c5 0 4-8 10-7 6 2 4 9-3 9-3 0-5-1-7-2z" fill="#5b9bd5" stroke="#2b5f9e"/></svg><span>Стили</span><svg width="9" height="6"><use href="#chev"/></svg></div>
        <footer><span>Стили</span><svg width="11" height="11"><use href="#launch"/></svg></footer>
      </div>
      <div class="wg w5">
        <b class="find"><svg width="20" height="20"><circle cx="13" cy="7" r="6" fill="#f5f5f5" stroke="#222" stroke-width="1.300"/><path d="M8.500 11.500L.5 19.500" stroke="#222" stroke-width="1.600"/></svg></b>
        <span>Редактирование</span><svg width="9" height="6"><use href="#chev"/></svg>
      </div>
      <svg class="collapse" width="13" height="8"><path d="M.7 7l5.800-5.500L12.300 7" fill="none" stroke="#222" stroke-width="1.500"/></svg>
    </div>
    <div class="wd-doc">
      <div class="pages">
        <article class="page p1">
          <div class="wt t1">
            <div class="c"><p><span class="sq">IPv4</span>-адрес последнего</p><p>узла подсети</p></div><div class="c"></div>
            <div class="c"><p>Широковещательный IPv4-</p><p>адрес подсети</p></div><div class="c"><p class="caret">172.32.63.255</p></div>
          </div>
          <i class="handle"></i>
        </article>
        <article class="page p2">
          <p>Проблема 4.</p>
          <p>Известно:</p>
          <div class="wt t2">
            <div class="c"><p>IP-адрес узла</p></div><div class="c"><p>10.2.87.139</p></div>
            <div class="c"><p>Маска подсети</p></div><div class="c"><p>255.0.0.0</p></div>
            <div class="c"><p>Новая маска подсети</p></div><div class="c"><p>255.255.128.0</p></div>
          </div>
          <p class="def">Определить:</p>
          <div class="wt t3"><div class="c"><p>Число бит подсети</p></div><div class="c"></div></div>
        </article>
      </div>
      <div class="wd-scroll"><b><svg width="9" height="5"><path d="M0 5l4.500-5L9 5z" fill="#555"/></svg></b><i></i><b><svg width="9" height="5"><path d="M0 0h9L4.500 5z" fill="#555"/></svg></b></div>
    </div>
    <footer class="wd-status">
      <span>Страница 5 из 8</span><span>Число слов: 274</span>
      <svg class="i" width="19" height="18"><path d="M8 15H1V1h6l2 2 2-2h6v7M9 3v9M10 10l8 7M18 10l-8 7" stroke-width="1.400"/></svg>
      <span>русский</span>
      <svg class="i" width="18" height="18"><path d="M4 1H1v4M1 13v4h3M14 1h3v4M17 13v4h-3M5 4h6l3 3v8H5zM11 4v3h3"/></svg>
      <span>Фокусировка</span>
      <svg class="i" width="17" height="17"><path d="M8.500 2L7 1H1v13h6l1.500 2L10 14h6V1h-6zM8.500 2v13M3 4h3M3 7h3M3 10h3M11 4h3M11 7h3M11 10h3"/></svg>
      <b class="layout"><svg class="i" width="15" height="18"><path d="M1 1h13v16H1zM3 5h9M3 8h9M3 11h9M3 14h9" stroke-width="1.500"/></svg></b>
      <svg class="i" width="19" height="17"><path d="M8 15H1V1h15v5M3 4h10M3 7h5M3 10h3"/><circle cx="13" cy="12" r="4.300"/><path d="M9 12h8M13 8v8M11 9v6M15 9v6"/></svg>
      <svg class="i" width="10" height="10"><path d="M0 5h10"/></svg>
      <svg width="126" height="15"><path d="M0 7.500h126M62.500 4v7" stroke="#8a8886"/><path d="M53 1h6v14h-6z" fill="#7a7876"/></svg>
      <svg class="i" width="10" height="10"><path d="M0 5h10M5 0v10"/></svg>
      <span>90 %</span>
    </footer>
  </section>

  <footer class="taskbar">
    <div class="app start"><svg width="20" height="20"><path d="M0 3l9-1.300V9.500H0zM10 1.500L20 0v9.500H10zM0 10.500h9v7.800L0 17zM10 10.500h10V20l-10-1.500z" fill="#fff"/></svg></div>
    <div class="app run stack"><svg width="30" height="30" viewBox="0 0 30 30"><circle cx="15" cy="15" r="15" fill="#1583d8"/><path d="M0 14C1-4 29-5 30 12c0 6-6 9-11 7 4-6-1-9-6-8-6 0-10 1-13 3z" fill="#2dbdcc"/><path d="M20 1c7 3 10 7 10 12 0 5-6 8-11 6 3-4 1-7 0-8 3-2 3-6 1-10z" fill="#55d66b"/><path d="M9 13c-3 10 6 16 19 10-3 5-8 7-13 7C6 28 4 18 9 13z" fill="#0c50a0"/><path d="M14 13c4-3 8 1 5 5-1 2 3 4 9 2-2 4-14 5-15-3z" fill="#1c1c1c"/></svg></div>
    <div class="app run"><svg width="28" height="24"><path d="M0 0h11l3 4h14v19H0z" fill="#e6a117"/><path d="M0 5h28v17H0z" fill="#ffd55c"/><path d="M5 24V14c0-1 1-2 2-2h14c1 0 2 1 2 2v10h-5v-5h-8v5z" fill="#2e8fe0"/></svg></div>
    <div class="app run active"><svg width="29" height="28"><path d="M7 0h22v8H7z" fill="#41a5ee"/><path d="M7 7h22v7H7z" fill="#2b7cd3"/><path d="M7 14h22v7H7z" fill="#185abd"/><path d="M7 21h22v7H7z" fill="#103f91"/><rect y="6" width="15" height="16" rx="1" fill="#1a56b4"/><text x="7.500" y="18" class="wmark">W</text></svg></div>
    <div class="app run"><svg width="30" height="28"><path d="M2 15C6 4 20 0 25 8c5 7-1 18-12 18-5 0-5-4-8-5-4 0-5-2-3-6z" fill="#b9dff2"/><circle cx="5" cy="16" r="2.300" fill="#e33c2e"/><circle cx="10" cy="10" r="2.500" fill="#3aa84a"/><circle cx="17" cy="8" r="2.500" fill="#f5a623"/><circle cx="13" cy="18" r="2.500" fill="#222"/><path d="M22 7l3 1-8 19h-3z" fill="#e28a2b"/><path d="M22 6l2-6 5 3-4 5z" fill="#c79a62"/></svg></div>
    <div class="tray">
      <svg class="i" width="17" height="10"><path d="M.7 9L8.500 1.500 16.300 9" stroke-width="1.500"/></svg>
      <svg class="i" width="15" height="19"><rect x="1" y="5" width="9" height="9" rx="1.500"/><path d="M10 8l4-2.500v8L10 11M2.500 2c2-1.700 5-1.700 8 0M2.500 17c2 1.700 5 1.700 8 0"/></svg>
      <svg class="i" width="21" height="16"><path d="M3 6v8h15V4H8M18 7h2v4h-2M1 1v4h4V1M3 5v4"/><path d="M6 6h8v6H6z" fill="#fff"/></svg>
      <svg class="i" width="16" height="17"><path d="M1 15C1 7 7 1 15 1M4 16C4 9 9 5 15 5M8 16c0-4 3-7 7-7M11 16c0-2 2-4 4-4"/><circle cx="14" cy="15" r="1.500" fill="#fff"/></svg>
      <svg class="i" width="19" height="14"><path d="M1 4h3l4-3v12L4 10H1zM11 4l7 7M18 4l-7 7"/></svg>
      <span>РУС</span>
      <time><span>11:19</span><span>07.04.2023</span></time>
      <svg class="i" width="20" height="20"><path d="M.7.7h18.600v15.600h-6.300l-3 3-3-3H.7z" stroke-width="1.400"/></svg>
      <i></i>
    </div>
  </footer>
</main>
</body>
</html>
```

FILE: styles.css
```css
* { box-sizing: border-box; }
body { margin: 0; background: #000; font: 14.5px/20px "Open Sans", "Noto Sans", sans-serif; letter-spacing: -.2px; color: #fff; }
.desktop { position: relative; width: 1920px; height: 1200px; overflow: hidden; background: #000; white-space: nowrap; }
.defs { position: absolute; }
svg { display: block; flex: none; }
i, em { font-style: normal; }
p, h2 { margin: 0; }
.i { fill: none; stroke: currentColor; stroke-width: 1.2; }
.dim { color: #888; }
.soft { color: #aaa; }
.pdf-mark { font: bold 7px "DejaVu Sans", sans-serif; letter-spacing: 0; fill: #fff; text-anchor: middle; }
.wmark { font: bold 12px "Open Sans", sans-serif; letter-spacing: 0; fill: #fff; text-anchor: middle; }
.win { position: absolute; display: flex; flex-direction: column; overflow: hidden; }

/* Desktop shortcuts */
.shortcuts { width: 94px; padding-top: 10px; }
.shortcut { display: flex; flex-direction: column; align-items: center; gap: 7px; text-align: center; }
.cisco { margin-top: 41px; gap: 4px; }

/* Browser */
.edge { left: 92px; top: 0; width: 868px; height: 575px; background: #3b3b3b; border-left: 1px solid #222; border-top: 1px solid #444; }
.edge-title { display: grid; grid-template-columns: 38px 313px 343px 57px 58px 30px; align-items: center; height: 50px; padding-left: 21px; background: #2c2c2c; color: #ccc; }
.edge-title > svg { margin-top: -1px; }
.edge-title > .dim { margin-top: -1px; }
.edge-title > .low { margin-top: 11px; }
.edge-tab { align-self: end; display: flex; align-items: center; width: 300px; height: 40px; padding: 0 13px 0 14px; background: #3b3b3b; border-radius: 8px 8px 0 0; }
.edge-tab span { flex: 1; margin-left: 12px; letter-spacing: -.1px; }
.edge-address { display: grid; grid-template-columns: 55px 45px 406px 39px 21px 55px 53px 64px 50px 44px; align-items: center; height: 48px; padding-left: 25px; }
.edge-address > svg:first-child { margin-top: -1px; }
.pill { display: grid; grid-template-columns: 31px 54px 18px 172px 43px 30px; align-items: center; width: 380px; height: 38px; padding-left: 22px; border-radius: 19px; background: #2a2a2a; font-size: 17.5px; letter-spacing: -.35px; }
.bar { width: 1px; height: 20px; background: #777; }
.edge-main { flex: 1; display: flex; border-top: 1px solid #6b6b6b; }
.pdf { width: 847px; display: flex; flex-direction: column; }
.pdf-tools { display: grid; grid-template-columns: 38px 17px 40px 38px 109px 44px 43px 38px 8px 61px 44px 18px 38px 18px 138px 37px 20px 45px 17px; align-items: center; height: 51px; padding-left: 16px; border-bottom: 1px solid #555; }
.page-input { width: 50px; height: 40px; line-height: 38px; text-align: center; border: 1px solid #888; border-radius: 2px; }
.pdf-view { height: 423px; padding-left: 40px; overflow: hidden; background: #333; }
.sheet { width: 764px; height: 500px; margin-top: -1px; padding-left: 66px; background: #fff; color: #000; font: 17.45px/20px "Liberation Sans", Arial, sans-serif; letter-spacing: 0; }
.sheet h2 { height: 40px; padding: 22px 0 0 45px; font-size: 17.45px; line-height: 17px; }
.ptable { width: 626px; border: 1px solid #000; border-width: 0 1px; }
.ptable.top { border-top: 1px solid #000; }
.ptable.second { margin-top: 19px; }
.prow { display: grid; grid-template-columns: 440px 184px; grid-template-rows: 100%; height: 20.75px; border-bottom: 1px solid #000; }
.prow > :first-child { padding-left: 44px; line-height: 20px; }
.prow > :nth-child(2) { border-left: 1px solid #000; line-height: 20px; }
.head { background: #dbe5f1; }
.ans { background: #0ff; }
.val { padding-left: 44px; }
.light-scroll { flex: 1; display: flex; flex-direction: column; align-items: center; padding: 10px 0 9px 2px; background: #f0f0f0; border-right: 1px solid #888; }
.light-scroll i { width: 17px; height: 27px; margin: 268px 0 auto; background: #c1c1c1; }

/* File manager */
.explorer { left: 0; top: 574px; width: 960px; height: 576px; background: #191919; border: 1px solid #2f2f2f; border-width: 1px 1px 0; }
.ex-title { display: grid; grid-template-columns: 24px 16px 26px 25px 19px 196px 229px 260px 58px 58px 20px; align-items: center; height: 38px; padding-left: 10px; background: #2b2b2b; color: #999; }
.slot { width: 4px; height: 18px; border: 1px solid #666; border-radius: 2px; }
.manage { align-self: end; width: 216px; height: 33px; line-height: 35px; text-align: center; background: #eded80; color: #222; font-size: 12.5px; letter-spacing: -.1px; }
.ex-tabs { display: flex; align-items: center; height: 28px; background: #000; font-size: 12.5px; letter-spacing: -.1px; }
.ex-tabs span { width: 107px; line-height: 30px; height: 28px; text-align: center; }
.ex-tabs .file { width: 71px; background: #575553; }
.ex-tabs .on { width: 81px; background: #202020; }
.ex-tabs span:nth-child(4) { width: 56px; }
.ex-tabs .ctx { width: 216px; margin-left: 1px; border: 1px solid #1d1d1d; border-width: 0 1px; letter-spacing: -.05px; }
.ex-tabs svg { margin-left: auto; color: #bbb; }
.help { width: 19px; height: 19px; margin: 0 3px 0 10px; line-height: 19px; text-align: center; border-radius: 50%; background: #0a6fd0; font-size: 14px; }
.ex-ribbon { display: flex; height: 114px; padding-top: 3px; background: #202020; border-bottom: 1px solid #303030; font-size: 12.5px; line-height: 17px; letter-spacing: -.15px; }
.grp { display: flex; flex-direction: column; }
.grp-body { height: 89px; display: flex; border-right: 1px solid #444; padding-top: 7px; }
.grp footer { text-align: center; color: #aaa; padding: 2px 4px 0 0; letter-spacing: 0; }
.g1 { width: 304px; }
.g2 { width: 274px; }
.g3 { width: 97px; }
.g4 { width: 110px; }
.g5 { width: 168px; }
.g1 footer, .g2 footer { padding-right: 0; }
.big { display: flex; flex-direction: column; align-items: center; gap: 6px; text-align: center; }
.off { color: #aaa; }
.off svg { color: #757575; }
.g1 .big { width: 72px; margin-left: 3px; letter-spacing: -.2px; }
.g1 .pinb { width: 126px; margin-left: 9px; padding-top: 6px; gap: 12px; }
.pinb span { letter-spacing: -.2px; }
.g1 .big + .big + .big { width: 62px; margin-left: 1px; }
.minis { display: flex; flex-direction: column; gap: 9px; }
.minis div { display: flex; align-items: center; gap: 4px; }
.g1 .minis { width: 22px; align-items: center; gap: 12px; margin: -1px 0 0; }
.two { display: grid; grid-template-columns: 138px 135px; grid-template-rows: 36px 36px; }
.two div { display: flex; align-items: center; gap: 4px; padding-left: 10px; }
.two .sep { border-left: 1px solid #555; padding-left: 8px; gap: 5px; }
.g3 .big { width: 52px; margin-left: 2px; }
.g3 .minis, .g4 .minis { margin: -2px 0 0 1px; }
.g3 .minis { margin-left: 3px; }
.g4 .big { width: 66px; margin-left: 1px; }
.col { flex-direction: column; gap: 8px; padding-left: 8px; padding-top: 6px; letter-spacing: -.3px; }
.col div { display: flex; align-items: center; gap: 4px; }
.ex-address { display: grid; grid-template-columns: 39px 33px 25px 21px 430px 382px; align-items: center; height: 50px; padding-left: 15px; }
.path { display: grid; grid-template-columns: 23px 18px 39px 17px 44px 17px 26px 16px 148px 36px 20px; align-items: center; width: 417px; height: 39px; padding-left: 5px; border: 1px solid #535353; color: #eee; letter-spacing: -.3px; }
.path .i { color: #999; }
.up { color: #666; font-size: 17px; line-height: 17px; margin-top: -5px; }
.search { display: flex; align-items: center; gap: 18px; width: 382px; height: 39px; padding-left: 17px; border: 1px solid #535353; color: #777; }
.ex-body { display: flex; height: 315px; padding-top: 1px; }
.tree { width: 180px; padding: 1px 0 0; overflow: hidden; }
.node { display: flex; align-items: center; height: 30px; padding-left: 43px; }
.node span { margin-left: auto; width: 115px; }
.node svg { margin-right: auto; }
.node .pinned { margin: 0 4px 0 -17px; color: #8a939b; }
.node.wide { padding-left: 41px; }
.node.root { margin-top: 10px; padding-left: 31px; }
.node.root span { width: 125px; }
.dark-scroll { display: flex; align-items: center; background: #171717; }
.dark-scroll i { background: #4d4d4d; }
.v { flex-direction: column; width: 23px; padding: 8px 2px 7px 0; border-right: 1px solid #2b2b2b; }
.v i { width: 19px; height: 130px; margin: 75px 0 auto; }
.files { flex: 1; display: flex; flex-direction: column; overflow: hidden; background: #202020; color: #ddd; }
.frow { display: grid; grid-template-columns: 23px 299px 180px 142px 82px; align-items: center; height: 27px; margin-left: 22px; padding-left: 6px; }
.frow span:last-child { text-align: right; }
.cols { height: 32px; margin: 0 0 9px 0; grid-template-columns: 18px 318px 180px 150px 82px; }
.cols span { line-height: 34px; height: 32px; }
.cols span:nth-child(n+3) { border-left: 1px solid #636363; padding-left: 7px; }
.cols span:last-child { text-align: left; }
.cols span:nth-child(2) { display: flex; }
.sort { margin: 0 0 0 121px; }
.sel { background: #333; }
.h { height: 21px; margin-top: auto; padding: 0 6px 0 8px; }
.h i { width: 682px; height: 19px; margin: 0 auto 0 8px; }
.ex-status { display: grid; grid-template-columns: 103px 13px 193px 571px 33px 20px; align-items: center; height: 30px; padding-left: 17px; background: #333; color: #ddd; letter-spacing: -.15px; }
.ex-status i { width: 1px; height: 13px; background: #fff; }
.view-on { width: 28px; height: 28px; padding: 5px 4px; background: #666; border: 1px solid #888; }

/* Text editor */
.word { left: 960px; top: 0; width: 960px; height: 1150px; background: #666; border: 1px solid #444; border-top: 0; }
.wd-title { display: grid; grid-template-columns: 124px 63px 36px 27px 20px 40px 34px 130px 62px 123px 64px 60px 56px 57px 16px; align-items: center; height: 44px; padding-left: 26px; background: #444; }
.wd-title .down { margin-top: 3px; }
.mu { width: 30px; height: 30px; line-height: 30px; text-align: center; border-radius: 50%; background: #d13438; font-weight: 400; font-size: 13px; }
.wd-tabs { display: grid; grid-template-columns: 64px 71px 8px 68px 10px 107px 8px 55px 9px 66px 9px 82px 8px 140px 8px 36px 8px 73px 20px 59px 16px; align-items: center; height: 38px; padding-left: 18px; background: #bfbbb8; color: #333; font-size: 16px; letter-spacing: -.25px; }
.wd-tabs i, .w2 > div > i, .w3 > div > i { width: 1px; height: 25px; background: #999; }
.wd-tabs .on { font-weight: 700; color: #222; height: 29px; width: 67px; margin-top: 5px; line-height: 26px; border-bottom: 4px solid #222; font-size: 15.5px; letter-spacing: -.7px; }
.cut { overflow: hidden; color: #111; }
.more { display: flex; align-items: center; justify-content: center; width: 16px; height: 38px; background: #999; border: 1px solid #444; color: #222; }
.wd-ribbon { display: flex; height: 120px; padding-top: 5px; background: #bfbbb8; color: #333; box-shadow: 0 2px 7px #0008; z-index: 1; }
.wg { display: flex; flex-direction: column; height: 109px; border-right: 1px solid #777; }
.wg > footer { display: flex; align-items: center; justify-content: space-between; height: 18px; margin-top: auto; margin-bottom: -5px; font-size: 12.5px; letter-spacing: 0; }
.w1 { width: 115px; }
.w1 footer { padding: 0 4px 0 3px; }
.w1-body { display: flex; padding-top: 4px; }
.wbig { display: flex; flex-direction: column; align-items: center; gap: 4px; width: 61px; margin-left: 12px; letter-spacing: -.3px; }
.w1-minis { display: flex; flex-direction: column; align-items: center; gap: 10px; margin-left: 7px; }
.w2 { width: 279px; padding-left: 10px; }
.w2 footer { padding: 0 3px 0 97px; }
.combos { display: flex; gap: 2px; }
.combo { display: flex; align-items: center; justify-content: space-between; width: 187px; height: 29px; padding: 0 3px; background: #d2d0ce; border: 1px solid #8a8886; }
.combo + .combo { width: 70px; }
.w2 > .w2-a, .w2 > .w2-b, .w3 > div { display: grid; align-items: center; height: 30px; }
.w2 > .w2-a { grid-template-columns: 32px 29px 25px 21px 36px 30px 22px 9px 20px; padding-left: 6px; font-size: 17px; }
.w2-b { grid-template-columns: 25px 23px 28px 21px 28px 22px 24px 17px 10px 32px 20px; padding-left: 4px; }
.w2-a em { font-style: italic; }
.w2-a s { font-size: 16px; }
.xb { font-weight: 700; font-size: 15.5px; letter-spacing: 0; line-height: 20px; }
.xb sub, .xb sup { font-size: 9px; color: #2b6cc4; line-height: 0; }
.era, .gr { display: flex; align-items: center; font-size: 20px; letter-spacing: 0; }
.era svg { margin: 10px 0 0 -5px; }
.gr svg { margin: -12px 0 0 0; }
.gr.s { font-size: 17px; }
.fa { width: 20px; height: 21px; line-height: 15px; font-size: 18px; text-align: center; border-bottom: 5px solid #f00; }
.aa { font-size: 16px; }
.fx { font: bold 21px "Open Sans", sans-serif; fill: #fff; stroke: #2b6cc4; stroke-width: 1.6; text-anchor: middle; }
.num { font: bold 8px "Open Sans", sans-serif; fill: #2b6cc4; letter-spacing: 0; }
.az { font-size: 12px; }
.az .dk { fill: #222; }
.w3 { width: 231px; padding-left: 10px; }
.w3 footer { padding: 0 3px 0 76px; }
.w3 > .w3-a { grid-template-columns: 28px 20px 29px 21px 25px 21px 10px 30px 20px; padding-left: 4px; height: 29px; }
.w3-b { grid-template-columns: 35px 30px 30px 27px 9px 24px 10px; }
.w3-c { grid-template-columns: 28px 17px 51px 9px 28px 12px 20px; padding-left: 4px; }
.box { display: flex; align-items: center; justify-content: center; width: 28px; height: 29px; background: #9d9b99; border: 1px solid #666; }
.box.wide { width: 47px; justify-content: space-between; padding: 0 5px 0 3px; }
.pil { font: 20px/20px "Liberation Sans", sans-serif; color: #111; }
.w4 { width: 72px; }
.w4 .wbig { padding-top: 4px; margin-left: 5px; }
.w4 footer { padding: 0 3px 0 8px; }
.w5 { width: 135px; align-items: center; }
.find { display: flex; align-items: center; justify-content: center; width: 40px; height: 38px; margin-bottom: 5px; background: #d2d0ce; border: 1px solid #8a8886; }
.w5 > svg { margin-top: 6px; }
.collapse { margin: 102px 11px 0 auto; }
.wd-doc { display: flex; height: 920px; overflow: hidden; }
.pages { display: flex; flex-direction: column; gap: 18px; padding-left: 23px; width: 938px; }
.page { width: 890px; background: #fff; color: #000; padding-left: 126px; font: 900 20.3px/44.500px Inter, sans-serif; letter-spacing: 1.25px; flex: none; }
.page p { height: 44.500px; }
.p1 { position: relative; height: 487px; overflow: hidden; }
.p2 { height: 480px; padding-top: 78px; }
.wt { display: grid; width: 702px; border: 1px solid #000; border-width: 1px 0 0 1px; }
.c { padding-left: 8px; border: 1px solid #000; border-width: 0 1px 1px 0; }
.c p { line-height: 32px; }
.c:nth-child(even) { letter-spacing: .85px; }
.t1 { grid-template-columns: 351px 350px; grid-template-rows: 90px 90px; margin-top: -27px; }
.t2 { grid-template-columns: 276px 425px; grid-auto-rows: 45px; margin-top: 6px; }
.t3 { grid-template-columns: 351px 350px; margin-top: 6px; }
.page p.def { margin-top: 39px; }
.sq { text-decoration: underline wavy #d22 1px; }
.caret { position: relative; width: max-content; border-right: 1px solid #000; }
.c .caret { height: 31px; }
.handle { position: absolute; left: 828px; top: 155px; width: 18px; height: 17px; border: 2px solid #b5b5b5; }
.wd-scroll { width: 20px; padding: 2px 1px; display: flex; flex-direction: column; background: #626262; }
.wd-scroll b { display: flex; align-items: center; justify-content: center; height: 17px; background: #6b6b6b; }
.wd-scroll i { height: 76px; margin: 508px 0 auto; background: #6b6b6b; }
.wd-status { display: grid; grid-template-columns: 119px 121px 40px 171px 22px 109px 34px 66px 41px 16px 131px 26px 30px; align-items: center; height: 28px; padding-left: 10px; background: #bfbbb8; border-top: 1px solid #444; border-bottom: 1px solid #555; color: #333; font-size: 12.5px; letter-spacing: -.1px; }
.wd-status span { padding-top: 2px; }
.layout { display: flex; align-items: center; justify-content: center; width: 50px; height: 26px; background: #a19f9d; }

/* Taskbar */
.taskbar { position: absolute; left: 0; top: 1150px; width: 1920px; height: 50px; display: flex; background: #1c1c1c; }
.app { position: relative; display: flex; align-items: center; justify-content: center; width: 51px; margin-right: 11px; padding: 3px 1px 0 0; border-bottom: 3px solid transparent; }
.app.start { width: 61px; margin-right: 8px; }
.run { border-bottom-color: #b5b2af; }
.stack::after { content: ""; position: absolute; right: 0; bottom: -3px; width: 11px; height: 3px; background: #8a8886; border-left: 1px solid #333; }
.app:nth-child(3) { margin-right: 6px; }
.active { width: 61px; margin-right: 6px; background: #4d4d4d; }
.tray { display: grid; grid-template-columns: 32px 26px 33px 27px 34px 44px 93px 45px 1px; align-items: center; margin-left: auto; padding-right: 5px; letter-spacing: -.3px; }
.tray time { display: flex; flex-direction: column; width: 70px; text-align: center; line-height: 24px; }
.tray > i { width: 1px; height: 50px; background: #777; }
```
